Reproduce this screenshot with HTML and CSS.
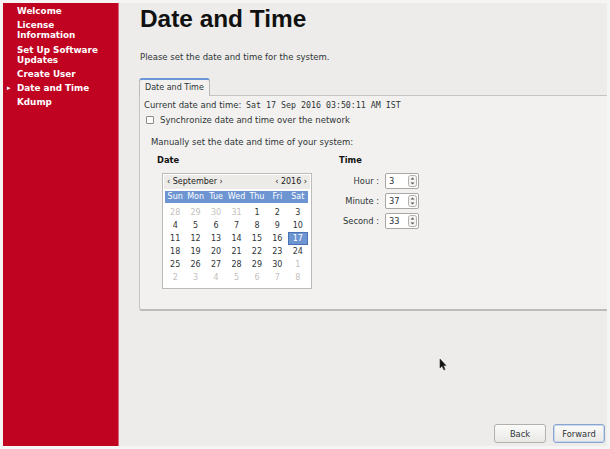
FILE: index.html
```html
<!DOCTYPE html>
<html>
<head>
<meta charset="utf-8">
<link rel="stylesheet" href="styles.css">
</head>
<body>
<div class="screen">
  <nav class="sidebar">
    <ul class="steps">
      <li class="step"><span class="mark"></span><span class="step-label">Welcome</span></li>
      <li class="step"><span class="mark"></span><span class="step-label">License Information</span></li>
      <li class="step"><span class="mark"></span><span class="step-label">Set Up Software Updates</span></li>
      <li class="step"><span class="mark"></span><span class="step-label">Create User</span></li>
      <li class="step current"><span class="mark">▸</span><span class="step-label">Date and Time</span></li>
      <li class="step"><span class="mark"></span><span class="step-label">Kdump</span></li>
    </ul>
  </nav>
  <main class="content">
    <h1 class="title">Date and Time</h1>
    <p class="intro">Please set the date and time for the system.</p>
    <div class="tabs">
      <div class="tab-strip"><div class="tab">Date and Time</div></div>
      <div class="tab-panel">
        <div class="current-line">Current date and time: <span class="mono">Sat 17 Sep 2016 03:50:11 AM IST</span></div>
        <div class="sync"><span class="checkbox"></span><span>Synchronize date and time over the network</span></div>
        <div class="manual">
          <div class="manual-title">Manually set the date and time of your system:</div>
          <div class="columns">
            <div class="date-col">
              <div class="col-title">Date</div>
              <div class="calendar">
                <div class="cal-head">
                  <span class="cal-nav"><span class="chev">‹</span> September <span class="chev">›</span></span>
                  <span class="cal-nav"><span class="chev">‹</span> 2016 <span class="chev">›</span></span>
                </div>
                <div class="cal-grid cal-names">
                  <span>Sun</span><span>Mon</span><span>Tue</span><span>Wed</span><span>Thu</span><span>Fri</span><span>Sat</span>
                </div>
                <div class="cal-grid cal-days">
                  <span class="other">28</span><span class="other">29</span><span class="other">30</span><span class="other">31</span><span>1</span><span>2</span><span>3</span>
                  <span>4</span><span>5</span><span>6</span><span>7</span><span>8</span><span>9</span><span>10</span>
                  <span>11</span><span>12</span><span>13</span><span>14</span><span>15</span><span>16</span><span class="selected">17</span>
                  <span>18</span><span>19</span><span>20</span><span>21</span><span>22</span><span>23</span><span>24</span>
                  <span>25</span><span>26</span><span>27</span><span>28</span><span>29</span><span>30</span><span class="other">1</span>
                  <span class="other">2</span><span class="other">3</span><span class="other">4</span><span class="other">5</span><span class="other">6</span><span class="other">7</span><span class="other">8</span>
                </div>
              </div>
            </div>
            <div class="time-col">
              <div class="col-title">Time</div>
              <div class="time-rows">
                <div class="time-row"><span class="time-label">Hour :</span><span class="spin"><span class="spin-value">3</span><svg class="spinner" width="9" height="12" viewBox="0 0 9 12"><rect x="0.5" y="0.5" width="8" height="11" rx="2" fill="#f4f3f1" stroke="#b3b1ad"/><path d="M2.5 4.5 L4.5 2.5 L6.5 4.5 Z" fill="#555"/><path d="M2.5 7.5 L4.5 9.5 L6.5 7.5 Z" fill="#555"/></svg></span></div>
                <div class="time-row"><span class="time-label">Minute :</span><span class="spin"><span class="spin-value">37</span><svg class="spinner" width="9" height="12" viewBox="0 0 9 12"><rect x="0.5" y="0.5" width="8" height="11" rx="2" fill="#f4f3f1" stroke="#b3b1ad"/><path d="M2.5 4.5 L4.5 2.5 L6.5 4.5 Z" fill="#555"/><path d="M2.5 7.5 L4.5 9.5 L6.5 7.5 Z" fill="#555"/></svg></span></div>
                <div class="time-row"><span class="time-label">Second :</span><span class="spin"><span class="spin-value">33</span><svg class="spinner" width="9" height="12" viewBox="0 0 9 12"><rect x="0.5" y="0.5" width="8" height="11" rx="2" fill="#f4f3f1" stroke="#b3b1ad"/><path d="M2.5 4.5 L4.5 2.5 L6.5 4.5 Z" fill="#555"/><path d="M2.5 7.5 L4.5 9.5 L6.5 7.5 Z" fill="#555"/></svg></span></div>
              </div>
            </div>
          </div>
        </div>
      </div>
    </div>
    <div class="spacer"></div>
    <div class="actions">
      <button class="btn">Back</button>
      <button class="btn primary">Forward</button>
    </div>
  </main>
  <svg class="cursor" width="8" height="13" viewBox="0 0 8 13"><path d="M1 1 L1 10 L3 8 L5 12 L6 11.5 L4.5 7.5 L7 7.5 Z" fill="#111" stroke="#333" stroke-width="0.6"/></svg>
</div>
</body>
</html>
```

FILE: styles.css
```css
* { box-sizing: border-box; }
html, body { margin: 0; padding: 0; }
body {
  width: 610px;
  height: 449px;
  overflow: hidden;
  background: #f6f5f5;
  font-family: "DejaVu Sans", sans-serif;
  color: #2e3436;
}
.screen {
  position: relative;
  display: flex;
  width: 610px;
  height: 449px;
  padding: 3px;
}
.sidebar {
  width: 116px;
  flex: none;
  background: #bf0321;
  border-right: 1px solid #d9667a;
}
.steps {
  list-style: none;
  margin: 0;
  padding: 3px 10px 0 0;
}
.step {
  display: flex;
  color: #fff;
  font-weight: bold;
  font-size: 8.8px;
  line-height: 10px;
  margin-bottom: 4.3px;
}
.mark {
  width: 14px;
  flex: none;
  font-size: 7px;
  padding-left: 4px;
}
.content {
  flex: 1;
  display: flex;
  flex-direction: column;
  background: #edecea;
  padding-left: 21px;
  min-width: 0;
}
.title {
  margin: 2px 0 0;
  font-family: "Liberation Sans", Arial, sans-serif;
  font-weight: bold;
  font-size: 24.4px;
  line-height: 28px;
  color: #111;
}
.intro {
  margin: 18px 0 0;
  font-size: 8.5px;
  line-height: 12px;
}
.tabs {
  margin-top: 15px;
  margin-left: -1px;
}
.tab-strip {
  display: flex;
  height: 17px;
}
.tab {
  width: 71px;
  height: 18px;
  padding: 0 5px;
  font-size: 8px;
  line-height: 16px;
  background: #f2f1ef;
  border: 1px solid #bcbab6;
  border-top: 2px solid #6b97d8;
  border-bottom: none;
  border-radius: 3px 3px 0 0;
  position: relative;
  z-index: 1;
}
.tab-panel {
  height: 216px;
  background: #f2f1ef;
  border: 1px solid #c6c4c0;
  border-right: none;
  border-bottom: 2px solid #bebcb8;
  border-radius: 0 0 0 3px;
  padding: 3px 0 0 4px;
  font-size: 8.5px;
  line-height: 12px;
}
.mono {
  font-family: "DejaVu Sans Mono", monospace;
  font-size: 8.3px;
  margin-left: 2px;
}
.sync {
  margin-top: 3px;
  display: flex;
  align-items: center;
}
.checkbox {
  width: 8px;
  height: 8px;
  margin: 0 6px 0 2px;
  border: 1px solid #8c8a86;
  border-radius: 1px;
  background: #fbfbfa;
}
.manual {
  margin-top: 10px;
  padding-left: 7px;
}
.columns {
  display: flex;
  margin-top: 6px;
  padding-left: 6px;
}
.date-col { width: 182px; }
.col-title {
  font-weight: bold;
  font-size: 8.3px;
  line-height: 12px;
  color: #111;
}
.calendar {
  margin: 7px 0 0 5px;
  width: 150px;
  height: 116px;
  border: 1px solid #bdbbb7;
  background: #fff;
  padding: 1px 3px 0 2px;
}
.cal-head {
  display: flex;
  justify-content: space-between;
  height: 14px;
  margin: 0 -2px 0 -1px;
  padding: 0 3px;
  background: #ecebe8;
  font-size: 8px;
  line-height: 14px;
  color: #222;
}
.chev { font-size: 8px; }
.cal-grid {
  display: grid;
  grid-template-columns: repeat(7, 1fr);
  text-align: center;
  font-size: 8px;
}
.cal-names {
  margin-top: 2px;
  height: 12px;
  line-height: 12px;
  background: #6d95d2;
  color: #fff;
}
.cal-days {
  margin-top: 3px;
  grid-auto-rows: 13px;
  line-height: 13px;
  color: #2e3436;
}
.cal-days .other { color: #c3c1bd; }
.cal-days .selected {
  background: #6d95d2;
  color: #fff;
  border: 1px solid #4b73b3;
  line-height: 11px;
}
.time-col { width: 100px; }
.time-rows {
  margin-top: 7px;
  display: flex;
  flex-direction: column;
  gap: 4px;
}
.time-row {
  display: flex;
  align-items: center;
  height: 16px;
}
.time-label {
  width: 40px;
  text-align: right;
  margin-right: 6px;
  font-size: 8.3px;
}
.spin {
  display: flex;
  align-items: center;
  justify-content: space-between;
  width: 34px;
  height: 16px;
  padding: 0 1px 0 3px;
  background: #fff;
  border: 1px solid #a9a7a3;
  border-radius: 2px;
  font-size: 8.3px;
}
.spacer { flex: 1; }
.actions {
  display: flex;
  justify-content: flex-end;
  gap: 7px;
  margin: 0 2px 3px 0;
}
.btn {
  width: 52px;
  height: 19px;
  padding: 0;
  font-family: "DejaVu Sans", sans-serif;
  font-size: 8.3px;
  color: #2e3436;
  background: linear-gradient(#fbfbfa, #e9e8e5);
  border: 1px solid #b2b0ac;
  border-radius: 3px;
}
.btn.primary {
  border-color: #8aa6cf;
  box-shadow: inset 0 0 0 1px #c9d7ec;
}
.cursor {
  position: absolute;
  left: 439px;
  top: 358px;
}
```
